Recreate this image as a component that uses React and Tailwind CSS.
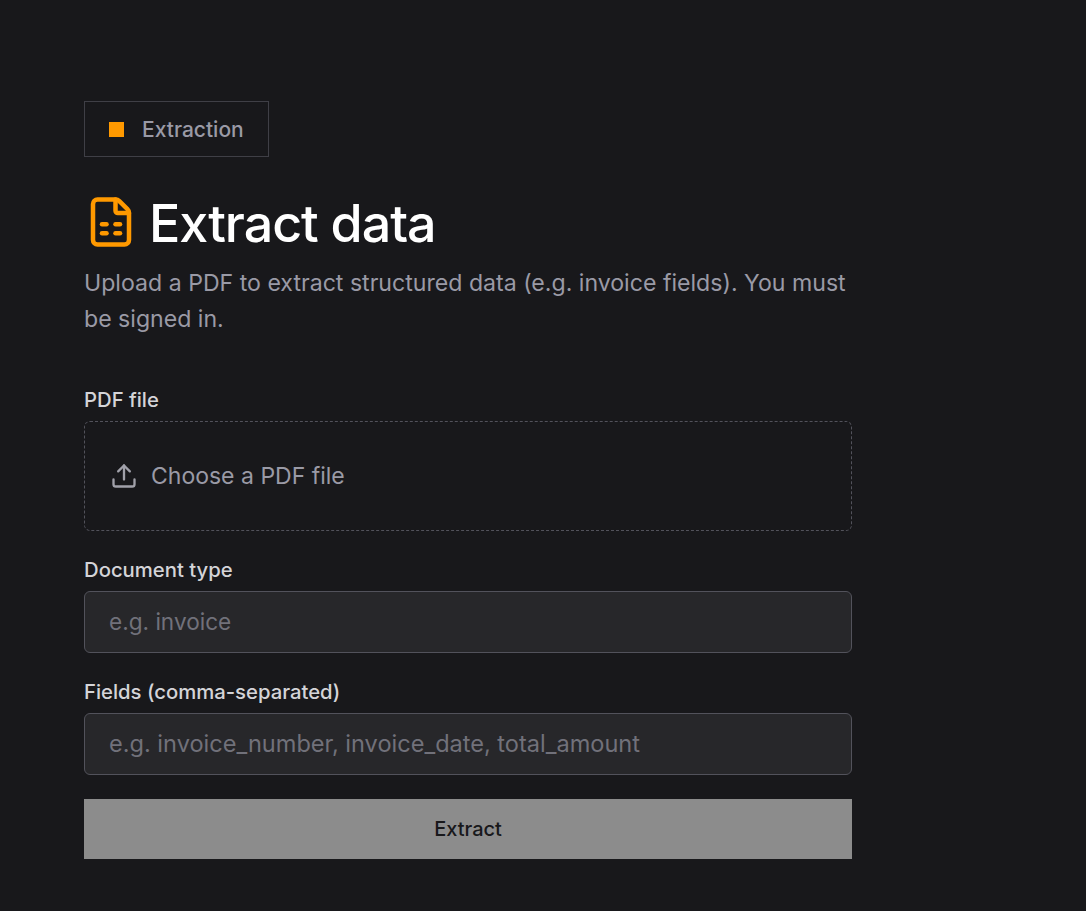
import React from "react";
import { FileSpreadsheet, Upload } from "lucide-react";

export default function App() {
  return (
    <div className="min-h-[911px] bg-[#18181b] pl-[84px] pt-[101px] font-['Inter',sans-serif]">
      <div className="w-[768px]">
        <div className="inline-flex h-14 items-center gap-[18px] border border-[#3f3f46] px-6">
          <span className="h-[15px] w-[15px] bg-[#ff9900]" />
          <span className="text-[21px] leading-none font-medium text-[#9a9aa6]">Extraction</span>
        </div>
        <div className="mt-[33px] flex items-center gap-[11px]">
          <FileSpreadsheet size={54} strokeWidth={2} className="shrink-0 text-[#ff9900]" />
          <h1 className="pt-1 text-[52px] leading-[60px] font-medium tracking-[-0.02em] text-white">Extract data</h1>
        </div>
        <p className="mt-[11px] text-[23.12px] leading-9 text-[#9a9aa6]">
          Upload a PDF to extract structured data (e.g. invoice fields). You must be signed in.
        </p>
        <form className="mt-12">
          <label className="block h-7 text-[20.3px] leading-[30px] font-medium text-[#d4d4d8]">PDF file</label>
          <div className="mt-2 flex h-[110px] items-center gap-[13px] rounded-md border border-dashed border-[#52525b] px-6">
            <Upload size={28} className="ml-px text-[#a1a1aa]" />
            <span className="text-[23px] text-[#9a9aa6]">Choose a PDF file</span>
          </div>
          <label className="mt-6 block h-7 text-[20.3px] leading-[30px] font-medium text-[#d4d4d8]">Document type</label>
          <div className="mt-2 flex h-[62px] items-center rounded-md border border-[#52525b] bg-[#27272a] px-6 text-[22.6px] text-[#71717a]">e.g. invoice</div>
          <label className="mt-6 block h-7 text-[20.3px] leading-[30px] font-medium text-[#d4d4d8]">Fields (comma-separated)</label>
          <div className="mt-2 flex h-[62px] items-center rounded-md border border-[#52525b] bg-[#27272a] px-6 text-[23.55px] text-[#71717a]">e.g. invoice_number, invoice_date, total_amount</div>
          <button type="button" className="mt-6 flex h-[60px] w-full items-center justify-center bg-[#8c8c8c] text-xl font-medium text-[#18181b]">Extract</button>
        </form>
      </div>
    </div>
  );
}
